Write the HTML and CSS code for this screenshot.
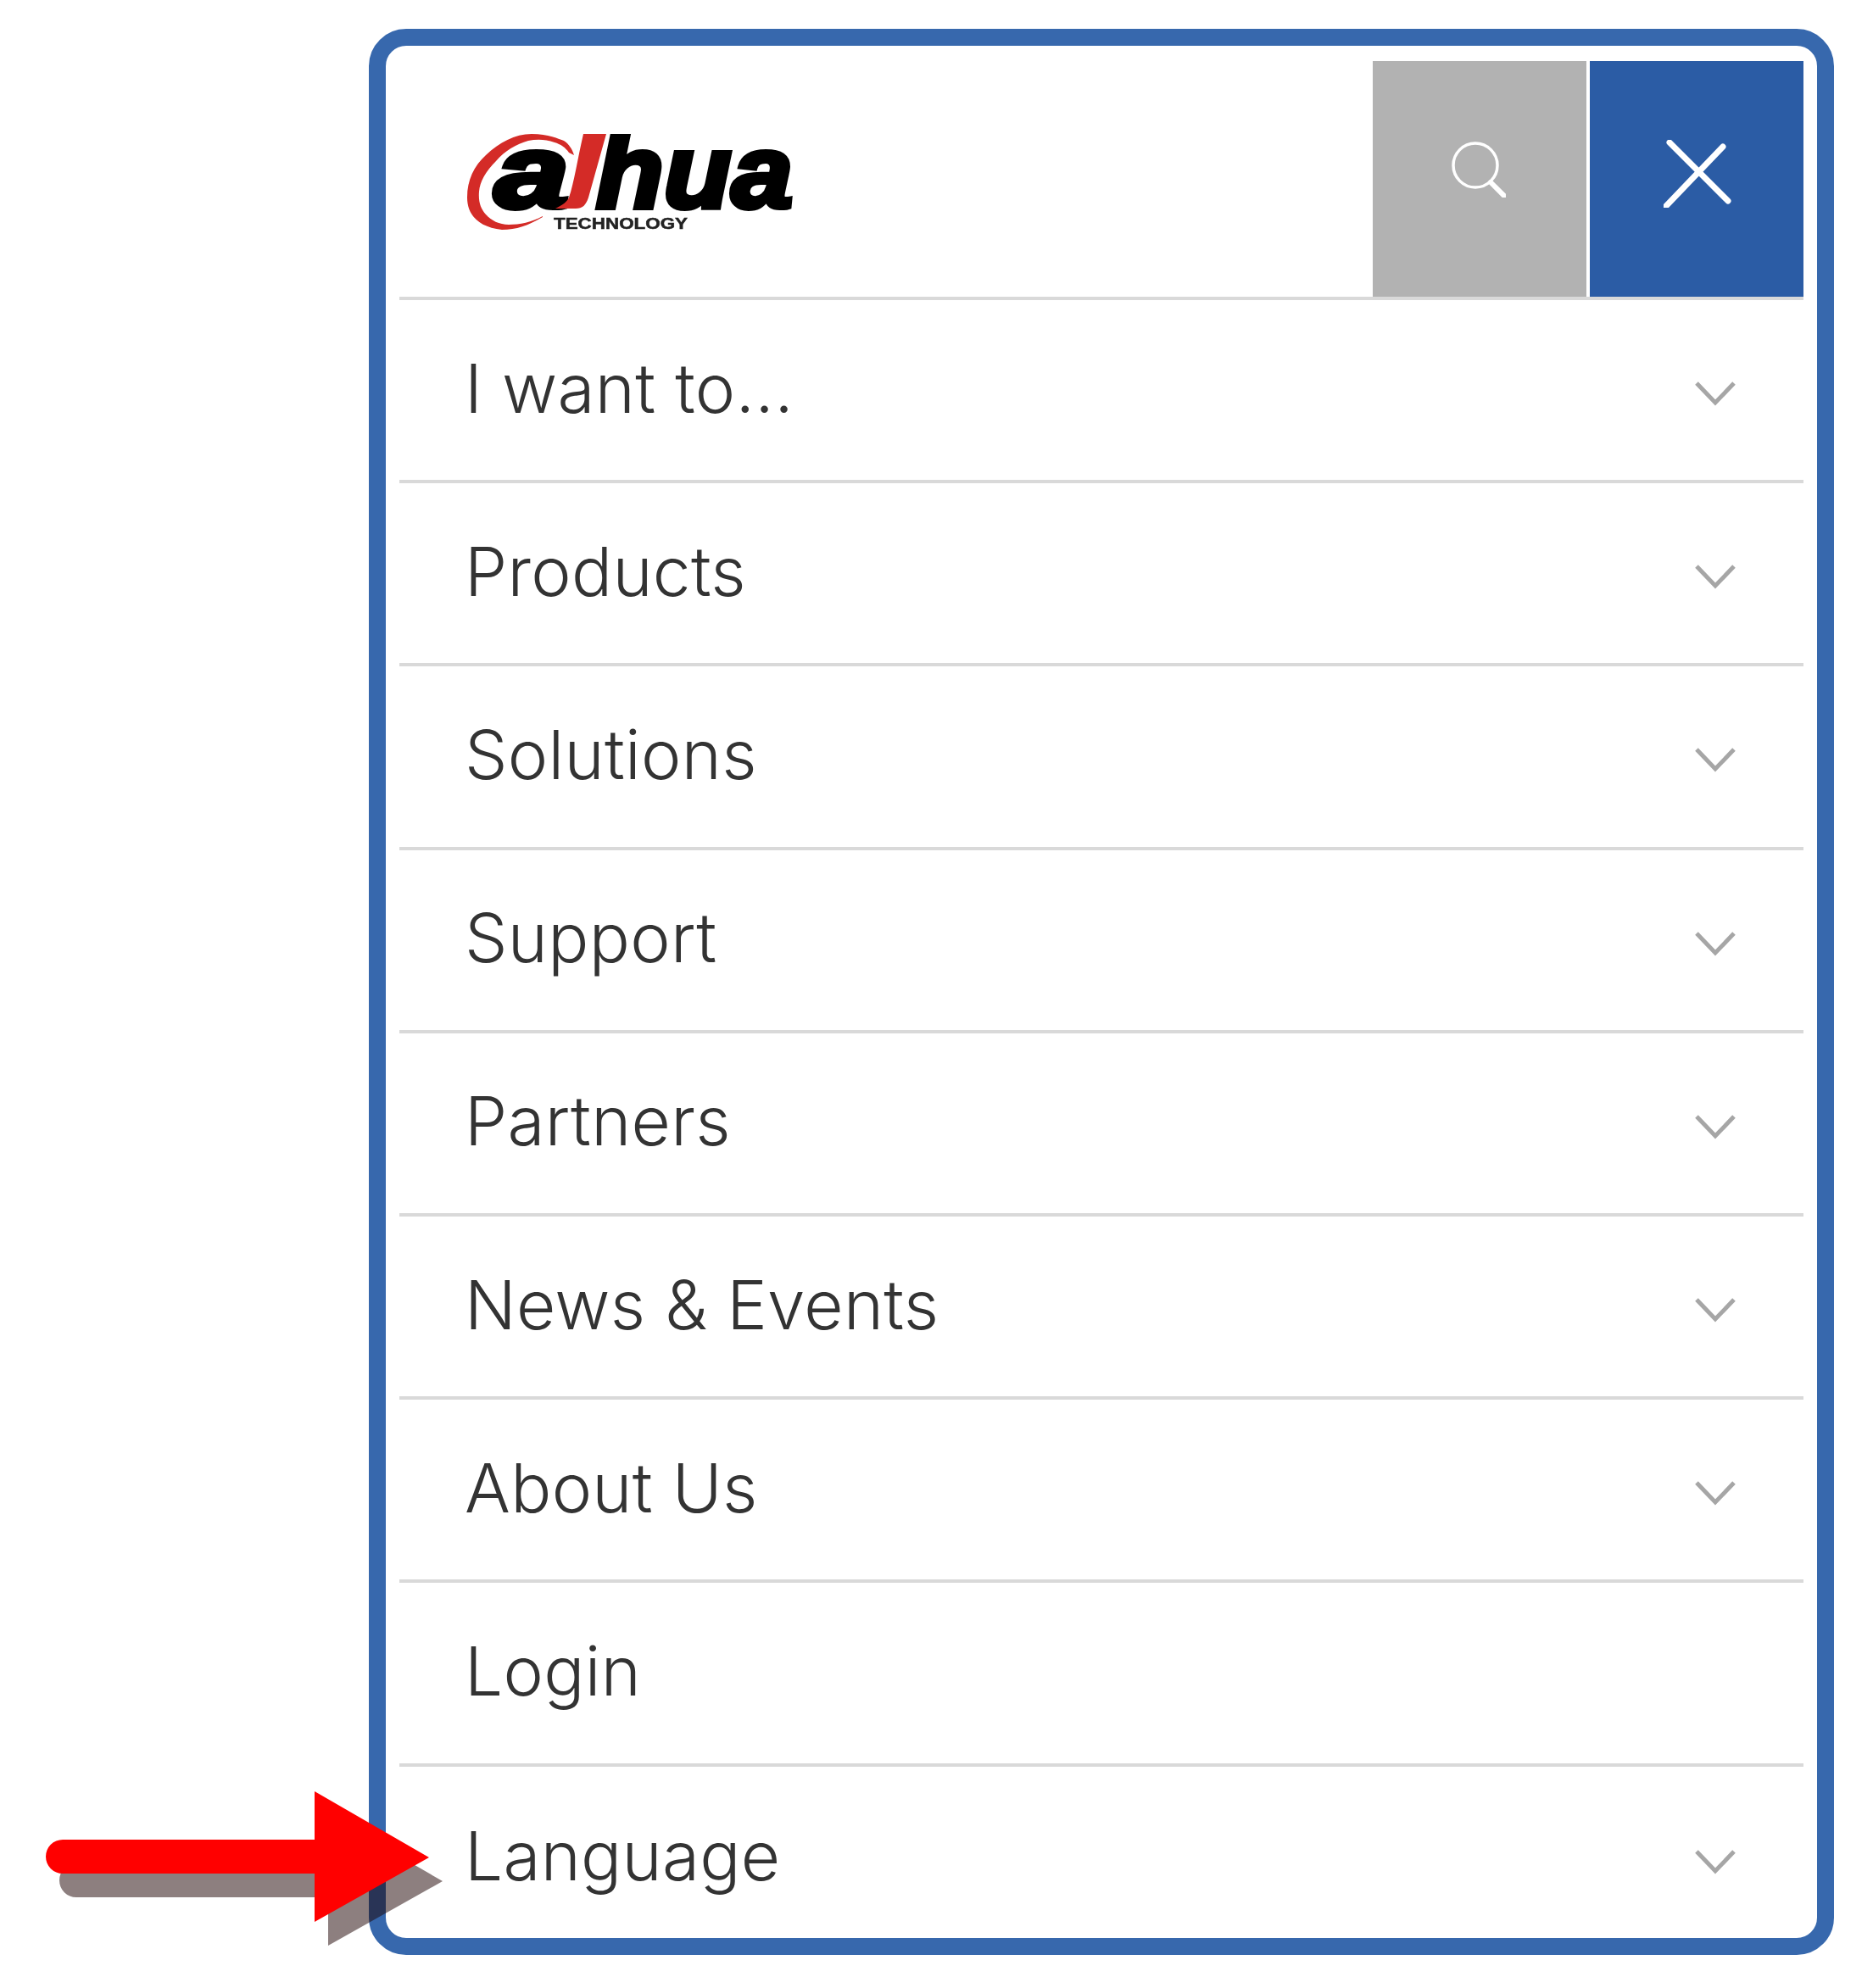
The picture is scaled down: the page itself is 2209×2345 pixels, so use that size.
FILE: index.html
```html
<!DOCTYPE html>
<html lang="en">
<head>
<meta charset="utf-8">
<title>Dahua menu</title>
<link rel="stylesheet" href="styles.css">
</head>
<body>
<main class="frame">
  <header class="head">
    <svg class="logo" viewBox="0 0 384 114" width="384" height="114" aria-label="Dahua Technology">
      <path class="logo-red" d="M89 98 C72 108 58 113 41 113 C14 110 0 96 0 75 C0 54 8 38 22 25 C38 10 56 0 76 0 C96 0 108 6 114 8 C120 12 124 18 126 25 L120 22 C116 16 110 12 103 10 C92 6 82 6 72 8 C58 12 44 20 34 32 C22 44 15 56 14 68 C13 80 16 88 22 95 C28 102 38 107 49 107 C62 107 76 104 89 97 Z"/>
      <text class="logo-a" x="32" y="87" textLength="88" lengthAdjust="spacingAndGlyphs">a</text>
      <path class="logo-red" d="M137 0 H164 L143 75 C140 84 136 88 128 88 H104 C112 84 118 80 120 75 C126 58 130 30 137 0 Z"/>
      <text class="logo-hua" x="152" y="87" textLength="232" lengthAdjust="spacingAndGlyphs">hua</text>
      <text class="logo-tech" x="102" y="112" textLength="158" lengthAdjust="spacingAndGlyphs">TECHNOLOGY</text>
    </svg>
    <div class="actions">
      <button class="action action-search" aria-label="Search">
        <svg viewBox="0 0 64 66" width="64" height="66"><circle cx="28" cy="28" r="26"/><path class="handle" d="M46 48 L62 64"/></svg>
      </button>
      <button class="action action-close" aria-label="Close">
        <svg viewBox="0 0 80 80" width="80" height="80"><path d="M7 3 L76 72 M70 8 L3 78"/></svg>
      </button>
    </div>
  </header>
  <nav class="menu">
    <a class="row"><span>I want to...</span><svg class="chev" viewBox="0 0 48 30" width="48" height="30"><path d="M2 3 L24 26 L46 3"/></svg></a>
    <a class="row"><span>Products</span><svg class="chev" viewBox="0 0 48 30" width="48" height="30"><path d="M2 3 L24 26 L46 3"/></svg></a>
    <a class="row"><span>Solutions</span><svg class="chev" viewBox="0 0 48 30" width="48" height="30"><path d="M2 3 L24 26 L46 3"/></svg></a>
    <a class="row"><span>Support</span><svg class="chev" viewBox="0 0 48 30" width="48" height="30"><path d="M2 3 L24 26 L46 3"/></svg></a>
    <a class="row"><span>Partners</span><svg class="chev" viewBox="0 0 48 30" width="48" height="30"><path d="M2 3 L24 26 L46 3"/></svg></a>
    <a class="row"><span>News &amp; Events</span><svg class="chev" viewBox="0 0 48 30" width="48" height="30"><path d="M2 3 L24 26 L46 3"/></svg></a>
    <a class="row"><span>About Us</span><svg class="chev" viewBox="0 0 48 30" width="48" height="30"><path d="M2 3 L24 26 L46 3"/></svg></a>
    <a class="row"><span>Login</span></a>
    <a class="row"><span>Language</span><svg class="chev" viewBox="0 0 48 30" width="48" height="30"><path d="M2 3 L24 26 L46 3"/></svg></a>
  </nav>
</main>
<svg class="arrow" viewBox="0 0 470 184" width="470" height="184" aria-hidden="true">
  <path class="arrow-shadow" d="M20 57 H317 V0 L452 78 L317 154 V97 H20 A20 20 0 0 1 20 57 Z"/>
  <path class="arrow-main" d="M20 57 H317 V0 L452 78 L317 154 V97 H20 A20 20 0 0 1 20 57 Z"/>
</svg>
</body>
</html>
```
FILE: styles.css
```css
* { box-sizing: border-box; }
html, body { margin: 0; background: #fff; }
body { width: 2209px; height: 2345px; position: relative; overflow: hidden; }
.frame {
  margin: 34px 0 0 435px;
  width: 1728px;
  height: 2272px;
  border: 20px solid #3768ad;
  border-radius: 44px;
  padding: 18px 16px 0 16px;
  background: #fff;
}
.head {
  height: 282px;
  display: flex;
  justify-content: space-between;
  border-bottom: 4px solid #d9d9d9;
  padding-left: 80px;
}
.logo { margin-top: 86px; filter: blur(.6px); }
.logo-red { fill: #d42b27; }
.logo-a, .logo-hua { font: italic 700 122px "Liberation Sans", sans-serif; fill: #000; stroke: #000; stroke-width: 6px; }
.logo-tech { font: 700 19px "Liberation Sans", sans-serif; fill: #222; stroke: #222; stroke-width: .5px; }
.actions { display: flex; gap: 4px; height: 278px; }
.action { width: 252px; height: 278px; border: 0; padding: 0; display: flex; align-items: center; justify-content: center; }
.action-search { background: #b2b2b2; }
.action-close { background: #2b5ca5; }
.action svg { fill: none; stroke: #fff; stroke-linecap: round; }
.action-search svg { stroke-width: 3.5px; margin: 0 2px 22px 0; }
.action-search .handle { stroke-width: 6px; }
.action-close svg { stroke-width: 7px; margin: 0 0 12px 2px; }
.menu { display: flex; flex-direction: column; }
.row {
  height: 216.2px;
  display: flex;
  align-items: center;
  justify-content: space-between;
  border-bottom: 4px solid #d9d9d9;
  padding: 0 80px 6px 77px;
  font: 350 80px "Inter", sans-serif;
  letter-spacing: .3px;
  color: #333;
}
.row:last-child { border-bottom: 0; }
.chev { fill: none; stroke: #a6a6a6; stroke-width: 5px; margin-top: 14px; }
.arrow { position: absolute; left: 54px; top: 2113px; }
.arrow-shadow { fill: #1b0000; opacity: .5; transform: translate(16px, 28px); }
.arrow-main { fill: #f00; }
```
